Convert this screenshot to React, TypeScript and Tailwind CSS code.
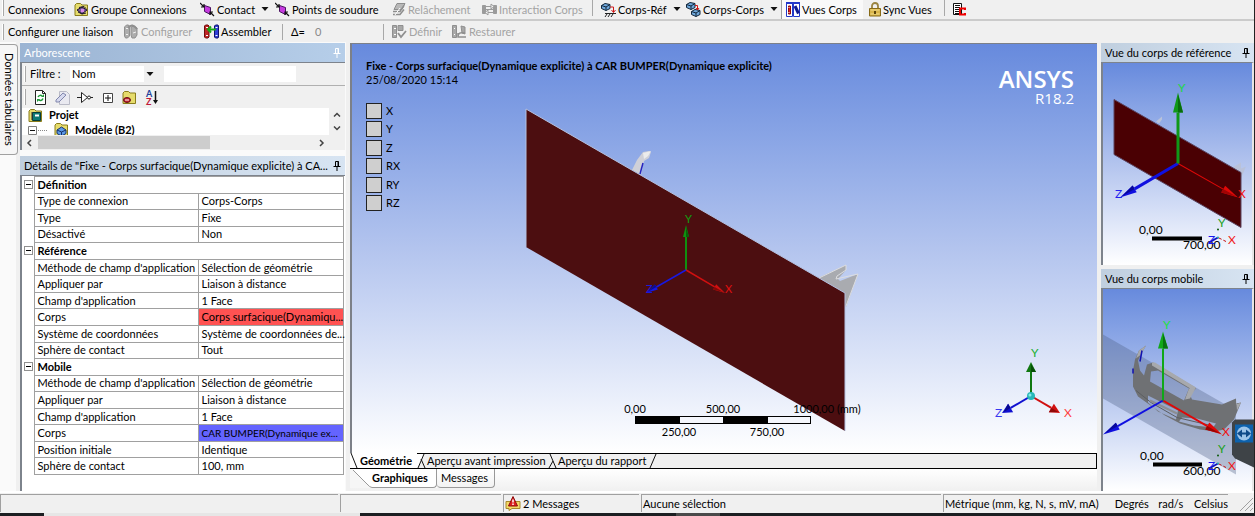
import { ReactNode } from "react";
import clsx from "clsx";

type Row = { label: string; value: string; tone?: "red" | "blue" };
type Section = { title: string; rows: Row[] };

const sections: Section[] = [
  {
    title: "Définition",
    rows: [
      { label: "Type de connexion", value: "Corps-Corps" },
      { label: "Type", value: "Fixe" },
      { label: "Désactivé", value: "Non" },
    ],
  },
  {
    title: "Référence",
    rows: [
      { label: "Méthode de champ d'application", value: "Sélection de géométrie" },
      { label: "Appliquer par", value: "Liaison à distance" },
      { label: "Champ d'application", value: "1 Face" },
      { label: "Corps", value: "Corps surfacique(Dynamiqu...", tone: "red" },
      { label: "Système de coordonnées", value: "Système de coordonnées de..." },
      { label: "Sphère de contact", value: "Tout" },
    ],
  },
  {
    title: "Mobile",
    rows: [
      { label: "Méthode de champ d'application", value: "Sélection de géométrie" },
      { label: "Appliquer par", value: "Liaison à distance" },
      { label: "Champ d'application", value: "1 Face" },
      { label: "Corps", value: "CAR BUMPER(Dynamique ex...", tone: "blue" },
      { label: "Position initiale", value: "Identique" },
      { label: "Sphère de contact", value: "100, mm" },
    ],
  },
];

const axes = ["X", "Y", "Z", "RX", "RY", "RZ"];

/* ---------- icons ---------- */

function Icon({ w = 15, children }: { w?: number; children: ReactNode }) {
  return (
    <svg width={w} height={15} viewBox={`0 0 ${w} 15`} className="shrink-0" aria-hidden="true">
      {children}
    </svg>
  );
}

const Folder = () => (
  <path d="M1 13.5V3l1.5-1.5h4L8 3h5.5v10.5z" fill="#e6dc6c" stroke="#8a7d1c" />
);

const GroupIcon = () => (
  <Icon>
    <Folder />
    <path d="M3 8l5-3 5 3-5 4z" fill="#7b5a9c" stroke="#1d1430" />
    <path d="M5 5.5l5-1 2 2M4 10l4 2 4-1" fill="none" stroke="#1d1430" />
    <rect x="7" y="7" width="3" height="3" fill="#d98ae8" />
  </Icon>
);

const ContactIcon = () => (
  <Icon>
    <path d="M4.5 3.5l6 2v7l-6-3z" fill="#c63be0" stroke="#4a1560" />
    <path d="M0 1l4 4M1 5h3V2M14 14l-4-4M10 13v-3h3" fill="none" stroke="#111" strokeWidth="1.2" />
  </Icon>
);

const ReleaseIcon = () => (
  <Icon w={14}>
    <path d="M5 1.5h8l-3 6H2z" fill="#b8b8b8" stroke="#8d8d8d" />
    <path d="M1 9.5h7l4-6M1 12.5h7l4-5" fill="none" stroke="#8d8d8d" strokeWidth="1.5" />
    <path d="M3 13L8 6" stroke="#fff" />
  </Icon>
);

const InteractionIcon = () => (
  <Icon>
    <path d="M0.5 3.5h3v8h-3zM11.5 3.5h3v8h-3z" fill="#9b9b9b" stroke="#9b9b9b" />
    <path d="M4 4.5h7M4 10.5h7M4 7.500h7" stroke="#9b9b9b" />
    <path d="M9 2l3 2.5L9 7zM6 8l-3 2.5L6 13z" fill="#f4f4f4" stroke="#9b9b9b" />
  </Icon>
);

const Cube = ({ x = 0, y = 0 }: { x?: number; y?: number }) => (
  <g transform={`translate(${x} ${y})`}>
    <path d="M0.5 2.5L4 0.5l5 1v4L5 7.5l-4.5-2z" fill="#6fa8dc" stroke="#12263a" />
    <path d="M0.5 2.5l4.5 1.5 4-2.5M5 4v3.5" fill="none" stroke="#12263a" />
  </g>
);

const BodyGroundIcon = () => (
  <Icon>
    <Cube y={1} />
    <path d="M9 5h3.5v5M10.5 8l2 2.5 2-2.5" fill="none" stroke="#d01818" />
    <path d="M4 11.5h11M6 12l-2 3M9 12l-2 3M12 12l-2 3" stroke="#222" />
  </Icon>
);

const BodyBodyIcon = () => (
  <Icon>
    <Cube />
    <Cube x={5} y={7} />
    <path d="M9 3.5h2.5V8M10 6l1.5 2L13 6" fill="none" stroke="#d01818" />
  </Icon>
);

const BodyViewsIcon = () => (
  <Icon w={14}>
    <path d="M0.5 1.5h6v13h-6zM7.5 1.5h6v13h-6z" fill="#fff" stroke="#2338c8" />
    <path d="M2.5 4v8h2V4z" fill="#e01b1b" stroke="#8c0c0c" />
    <path d="M2.5 5.5h1M2.5 10.5h1" stroke="#fff" />
    <path d="M9 4l3.5 7.5" stroke="#101a90" strokeWidth="3" />
    <path d="M0 1h14" stroke="#2338c8" strokeWidth="2" />
  </Icon>
);

const LockIcon = () => (
  <Icon w={12}>
    <path d="M3 7V4a3 3 0 0 1 6 0v3" fill="none" stroke="#9a8440" strokeWidth="1.8" />
    <path d="M0.5 6.5h11v7.5h-11z" fill="#d9b54a" stroke="#876a16" />
    <path d="M1.5 8h9M1.5 12h9" stroke="#f2dc8c" />
    <path d="M5 9h2v3H5z" fill="#5a430a" />
  </Icon>
);

const WorksheetIcon = () => (
  <Icon>
    <path d="M0.5 1.5h8v11h-8z" fill="#fff" stroke="#111" />
    <path d="M2 3.5h5M2 5.5h5M2 7.5h4M2 9.5h4M2 11.5h4" stroke="#111" />
    <path d="M12 8V6.500H7v6h5V11" fill="none" stroke="#f00000" strokeWidth="2" />
  </Icon>
);

const ConfigureIcon = () => (
  <Icon>
    <path d="M0.5 3l2-2h2l1 2v9l-2 2h-2l-1-2zM7 3l3-1 3 2v7l-2 3H8l-1-3z" fill="#adadad" stroke="#8f8f8f" />
    <path d="M2 4.5h2M2 10.5h2M9 9l3-1" fill="none" stroke="#f0f0f0" />
    <path d="M4 4c3-4 6-3 9 1" fill="none" stroke="#8f8f8f" strokeWidth="2" />
  </Icon>
);

const AssembleIcon = () => (
  <Icon>
    <path d="M0.5 2l1-1h2.5l1 1v11l-1 1H1.5l-1-1z" fill="#c02828" stroke="#700c0c" />
    <path d="M10.5 2l1-1H14l0.5 1v11l-0.5 1h-2.5l-1-1z" fill="#3040d8" stroke="#10106c" />
    <path d="M2 3.5h2M2 11.5h2M11.5 3.5h2M11.5 11.5h2" stroke="#fff" />
    <path d="M4 5.5h8M7 2.5L4 5.5l3 3" fill="none" stroke="#18a818" strokeWidth="2" />
  </Icon>
);

const DefineIcon = () => (
  <Icon>
    <path d="M0.5 1.5h4v12h-4zM6 1.5h5v5H6z" fill="#a8a8a8" stroke="#8f8f8f" />
    <path d="M2 4.5h2M2 10.5h2" stroke="#fff" />
    <path d="M6 9l3 4 5-6" fill="none" stroke="#8f8f8f" strokeWidth="1.8" />
  </Icon>
);

const RestoreIcon = () => (
  <Icon>
    <path d="M0.5 1.5h4v12h-4zM9 2l4 1v7l-3-1z" fill="#a8a8a8" stroke="#8f8f8f" />
    <path d="M6 13c0-4 2-5 7-4M6 9v4h4M10 13h4" fill="none" stroke="#8f8f8f" strokeWidth="1.5" />
    <path d="M2 4.5h1M2 10.5h1" stroke="#fff" />
  </Icon>
);

const Caret = () => (
  <svg width="8" height="5" viewBox="0 0 8 5" className="ml-1 shrink-0" aria-hidden="true">
    <path d="M0.5 0h7L4 4z" fill="#111" />
  </svg>
);

const RefreshIcon = () => (
  <Icon>
    <path d="M2.5 0.5h7l3 3v11h-10z" fill="#fff" stroke="#222" />
    <path d="M9.5 0.5v3h3" fill="none" stroke="#222" />
    <path d="M5 7c1-2 3-2 4-1M10 8.5c-1 2.5-3 2.5-4.5 1" fill="none" stroke="#1f9a3a" strokeWidth="1.5" />
    <path d="M8 7h3V4zM7 9H4v3z" fill="#1f9a3a" />
  </Icon>
);

const EraserIcon = () => (
  <Icon>
    <path d="M4.5 1.5h7l3 3v10h-10z" fill="#e9e9f0" stroke="#b9bac6" />
    <path d="M1 10l7-7 3 2-7 7H1z" fill="#d6d9ee" stroke="#8186ac" />
  </Icon>
);

const GateIcon = () => (
  <Icon w={16}>
    <path d="M4.5 2.5v10l6-5z" fill="#fff" stroke="#222" />
    <path d="M0 7.5h4M13 7.5h3" stroke="#222" />
    <circle cx="12" cy="7.5" r="1.5" fill="#fff" stroke="#222" />
  </Icon>
);

const ExpandAllIcon = () => (
  <Icon>
    <path d="M3.5 3.5h9v9h-9z" fill="#fff" stroke="#444" />
    <path d="M5 8h6M8 5v6" stroke="#111" />
  </Icon>
);

const HideFolderIcon = () => (
  <Icon>
    <Folder />
    <ellipse cx="5" cy="10" rx="3.5" ry="2.5" fill="#c4202c" stroke="#641018" />
    <path d="M3 10h4" stroke="#fff" />
  </Icon>
);

const SortIcon = () => (
  <Icon>
    <text x="2" y="7" fontSize="9" fontWeight="700" fill="#20409a">A</text>
    <text x="2" y="15" fontSize="9" fontWeight="700" fill="#c01838">Z</text>
    <path d="M11.5 1v11" stroke="#111" strokeWidth="1.5" />
    <path d="M9 10h5l-2.5 4z" fill="#111" />
  </Icon>
);

const ProjectIcon = () => (
  <Icon>
    <Folder />
    <path d="M4.5 4.5h8v8h-8z" fill="#0e7a74" stroke="#053c3a" />
    <path d="M7 6.5h4v2H7z" fill="#fff" />
    <path d="M3 5h2M3 7h2M3 9h2M3 11h2" stroke="#333" />
  </Icon>
);

const ModelIcon = () => (
  <Icon>
    <Folder />
    <path d="M3 8l4.5-3L12 8v3.5L7.5 14 3 11.5z" fill="#5d9be8" stroke="#16306c" />
    <path d="M3 8l4.5 2L12 8M7.5 10v4" fill="none" stroke="#16306c" />
  </Icon>
);

const WarningIcon = () => (
  <Icon w={16}>
    <path d="M1 5.5h14v7H7l-3 2v-2H1z" fill="#f4d968" stroke="#a8892a" />
    <path d="M8 0.5l4.5 9.5h-9z" fill="#e02020" stroke="#8c0c0c" />
    <path d="M8 3.5v3M8 7.5v1.5" stroke="#fff" strokeWidth="1.5" />
  </Icon>
);

const Pin = () => (
  <svg width="8" height="10" viewBox="0 0 8 10" aria-hidden="true">
    <path d="M2.5 0.5h3v5M2.5 0.5v5M5 0.5v5M0.5 5.5h7M4 6v4" fill="none" stroke="currentColor" />
  </svg>
);

/* ---------- toolbar parts ---------- */

function Tool({ icon, label, className, caret, disabled, pressed }: {
  icon: ReactNode;
  label?: string;
  className?: string;
  caret?: boolean;
  disabled?: boolean;
  pressed?: boolean;
}) {
  return (
    <button
      type="button"
      disabled={disabled}
      aria-label={label ?? "Feuille de travail"}
      aria-pressed={pressed}
      className={clsx(
        "flex h-[19px] shrink-0 items-center gap-0.5 whitespace-nowrap",
        disabled && "text-[#a3a3a3]",
        pressed && "border-l border-[#a0a0a0] bg-[#f9f9f9] pl-1",
        className,
      )}
    >
      {icon}
      {label}
      {caret && <Caret />}
    </button>
  );
}

const Grip = () => <span className="h-4 w-0.5 shrink-0 border-r border-[#a8a8a8] bg-white" />;
const Divider = () => <span className="mr-2 h-4 w-px shrink-0 bg-[#a8a8a8]" />;

function PanelHeader({ title, active }: { title: string; active?: boolean }) {
  return (
    <header
      className={clsx(
        "flex h-[19px] shrink-0 items-center justify-between bg-linear-to-r px-1",
        active ? "from-[#9bb4d3] to-[#b6cee9] text-white" : "from-[#c0cfdf] to-[#d7e4f2]",
      )}
    >
      <h2 className="whitespace-nowrap">{title}</h2>
      <button type="button" aria-label="Épingler" className="shrink-0">
        <Pin />
      </button>
    </header>
  );
}

/* ---------- 3D drawing parts ---------- */

type ArrowProps = { x: number; y: number; dx: number; dy: number; head: number; half: number; color: string; dark: string; w: number };

function Arrow({ x, y, dx, dy, head, half, color, dark, w }: ArrowProps) {
  const len = Math.hypot(dx, dy);
  const angle = (Math.atan2(dy, dx) * 180) / Math.PI;
  return (
    <g transform={`translate(${x} ${y}) rotate(${angle})`}>
      <path d={`M0 0H${len - head}`} stroke={color} strokeWidth={w} />
      <path d={`M${len - head} ${-half}L${len} 0L${len - head} ${half}z`} fill={color} />
      <path d={`M${len - head} 0H${len - 2}L${len - head} ${half}z`} fill={dark} />
    </g>
  );
}

const SmallTriad = ({ x, y }: { x: number; y: number }) => (
  <g fontSize="12">
    <path d={`M${x} ${y}l8 4`} stroke="#c01010" strokeDasharray="4 2" />
    <path d={`M${x} ${y}l-9 5`} stroke="#1010c0" strokeWidth="2" />
    <circle cx={x} cy={y} r="1" fill="#20b0b0" />
    <circle cx={x} cy={y - 8} r="1" fill="#0a5a0a" />
    <text x={x} y={y - 11} fill="#18a018">Y</text>
    <text x={x + 10} y={y + 6} fill="#f01818">X</text>
    <text x={x - 10} y={y + 6} fill="#1818f0">Z</text>
  </g>
);

function MainScene() {
  return (
    <svg viewBox="352 44 745 409" className="absolute inset-0 h-full w-full" role="img" aria-label="Vue géométrique">
      <path d="M632 170l5-10 6-8 6-1 2 1-2 6-5 3-3 14z" fill="#cfd0d8" />
      <path d="M643 153l8-2-3 5-4 3z" fill="#ececec" />
      <path d="M640 174l3-11" stroke="#2424c0" strokeWidth="1.5" />
      <path d="M818 278l28-13v5l-8 9 2 2 18-7-12 33-6-12z" fill="#a9abb0" />
      <path d="M819 278l27-13v5l-9 6-1 3 22-5-12 32" fill="none" stroke="#dcdde0" />
      <path d="M526 109L845 293V431L526 247z" fill="#4c0e10" />
      <path d="M526 247V109L845 293V431" fill="none" stroke="#b4c0e0" />

      <Arrow x={686} y={270} dx={0} dy={-45} head={12} half={3} color="#109010" dark="#086008" w={2} />
      <Arrow x={686} y={270} dx={39} dy={23} head={12} half={3} color="#d01010" dark="#800808" w={1.5} />
      <Arrow x={686} y={270} dx={-40} dy={23} head={12} half={3} color="#1818e0" dark="#0c0c90" w={1.5} />
      <g fontSize="11">
        <text x="685" y="223" fill="#10a010">Y</text>
        <text x="725" y="293" fill="#e01010">X</text>
        <text x="646" y="293" fill="#1818e0">Z</text>
      </g>

      <path d="M635 416h176v8H635z" fill="#000" />
      <path d="M680 417h43v6h-43zM768 417h42v6h-42z" fill="#f4f6fc" />
      <g fontSize="11" textAnchor="middle">
        <text x="635" y="413">0,00</text>
        <text x="723" y="413">500,00</text>
        <text x="679" y="436">250,00</text>
        <text x="767" y="436">750,00</text>
        <text x="827" y="413">1000,00 (mm)</text>
      </g>

      <Arrow x={1031} y={396} dx={0} dy={-34} head={10} half={5} color="#107810" dark="#085008" w={2} />
      <Arrow x={1031} y={396} dx={29} dy={17} head={10} half={5} color="#d01010" dark="#900808" w={2} />
      <Arrow x={1031} y={396} dx={-29} dy={17} head={10} half={5} color="#1010d0" dark="#080890" w={2} />
      <circle cx="1031" cy="396" r="4" fill="#28b8b8" />
      <circle cx="1030" cy="395" r="1.5" fill="#8ce8e8" />
      <g fontSize="12">
        <text x="1031" y="357" fill="#20b030">Y</text>
        <text x="1064" y="417" fill="#ff4040">X</text>
        <text x="995" y="417" fill="#3838f0">Z</text>
      </g>

      <g fill="#fff" textAnchor="end" className="font-['Open_Sans',sans-serif]">
        <text x="1074" y="88" fontSize="24" fontWeight="600">ANSYS</text>
        <text x="1074" y="104" fontSize="15">R18.2</text>
      </g>
    </svg>
  );
}

function ReferenceScene() {
  return (
    <svg viewBox="1103 63 149 201" className="h-full w-full" role="img" aria-label="Corps de référence">
      <path d="M1156 121l6-5v3l-3 4zM1231 168l10-6v6l5-2-6 14z" fill="#b9c2da" />
      <path d="M1114 99L1241 172V227L1114 154z" fill="#4a0003" stroke="#5c4460" />
      <Arrow x={1178} y={163} dx={60} dy={34} head={17} half={4} color="#e00808" dark="#a00404" w={1} />
      <Arrow x={1178} y={163} dx={-58} dy={34} head={17} half={4} color="#1010e0" dark="#08089c" w={3} />
      <Arrow x={1178} y={163} dx={0} dy={-71} head={20} half={5} color="#109818" dark="#086c0c" w={3} />
      <g fontSize="12">
        <text x="1178" y="91" fill="#20d840">Y</text>
        <text x="1238" y="197" fill="#f01010">X</text>
        <text x="1115" y="197" fill="#2020f0">Z</text>
        <text x="1139" y="233">0,00</text>
        <text x="1183" y="248">700,00</text>
      </g>
      <path d="M1152 236h50v4h-50z" />
      <SmallTriad x={1218} y={237} />
    </svg>
  );
}

function MobileScene() {
  return (
    <svg viewBox="1103 289 149 201" className="h-full w-full overflow-visible" role="img" aria-label="Corps mobile">
      <path d="M1103 334L1236 410V474L1103 398z" fill="#4e5f85" fillOpacity="0.35" />
      {/* bumper shell with its three openings */}
      <path
        fillRule="evenodd"
        fill="#6f7174"
        d="M1146 345L1139 350L1135 359L1133 370V386L1138 396L1152 406L1165 415L1180 423L1200 429L1215 431L1224 429L1234 419L1241 402L1236 403V398L1222 404L1192 399L1190 394L1196 388L1175 375L1153 362L1147 364L1144 375L1140 370L1138 360L1142 352Z
           M1151 371L1158 370L1189 388L1184 400L1150 381Z
           M1148 395L1178 410L1176 419L1158 411L1148 402Z
           M1182 417L1197 418L1216 423L1213 427L1194 425L1179 421Z"
      />
      <path d="M1146 345l-7 5-3 8 5-4zM1152 362l3 0 41 25-4 2-40-24zM1189 388l7-1-6 11-5 1zM1236 398v6l5-2-4 8z" fill="#a7a9ad" />
      <path d="M1136 390l15 12 26 15 34 8" fill="none" stroke="#5c5e62" />
      <path d="M1150 400l27 13" fill="none" stroke="#8c8e92" strokeWidth="2" />
      <path d="M1142 350l-2 11M1133 368v5" stroke="#1010b0" strokeWidth="1.5" />
      <Arrow x={1163} y={400} dx={59} dy={34} head={17} half={4} color="#e00808" dark="#980404" w={2} />
      <Arrow x={1163} y={400} dx={-60} dy={34} head={17} half={4} color="#1010e0" dark="#08089c" w={2} />
      <Arrow x={1163} y={400} dx={0} dy={-69} head={17} half={5} color="#10a818" dark="#087410" w={2} />
      <g fontSize="12">
        <text x="1163" y="328" fill="#20e040">Y</text>
        <text x="1222" y="435" fill="#f01010">X</text>
        <text x="1140" y="459">0,00</text>
        <text x="1183" y="474">600,00</text>
      </g>
      <path d="M1153 462h49v4h-49z" />
      <SmallTriad x={1218} y={463} />
      <path d="M1232 422l3-3h19v48l-19-9-3-4z" fill="#3e4347" />
      <path d="M1235 424h18v18h-18z" fill="#0d62ad" />
      <circle cx="1244" cy="433" r="7" fill="#9cc4e8" />
      <path d="M1237 433l5-4v3h4v-3l5 4-5 4v-3h-4v3z" fill="#0d4a88" />
    </svg>
  );
}

/* ---------- panels ---------- */

function TreePanel() {
  return (
    <section className="flex flex-col">
      <PanelHeader title="Arborescence" active />
      <div className="border-t border-l-2 border-[#7d838c] bg-[#f0f0f0]">
        <div className="flex h-[23px] items-center border-b border-[#b0b0b0] pl-0.5">
          <Grip />
          <label htmlFor="filter-kind" className="w-11 pl-1">Filtre :</label>
          <span className="relative flex">
            <select id="filter-kind" className="h-4 w-[86px] appearance-none bg-white px-0.5 outline-none" defaultValue="Nom">
              <option>Nom</option>
            </select>
            <span className="pointer-events-none absolute inset-y-0 right-0 flex w-3 items-center justify-center bg-[#f0f0f0]">
              <svg width="8" height="5" viewBox="0 0 8 5" aria-hidden="true">
                <path d="M0.5 0h7L4 4z" fill="#111" />
              </svg>
            </span>
          </span>
          <input aria-label="Texte du filtre" className="ml-2 h-4 w-[132px] bg-white px-1 outline-none" />
        </div>
        <div className="flex h-[22px] items-center gap-[7px] pl-0.5">
          <Grip />
          <button type="button" aria-label="Actualiser"><RefreshIcon /></button>
          <button type="button" aria-label="Effacer"><EraserIcon /></button>
          <button type="button" aria-label="Étendre la sélection"><GateIcon /></button>
          <button type="button" aria-label="Développer tout"><ExpandAllIcon /></button>
          <button type="button" aria-label="Masquer les dossiers"><HideFolderIcon /></button>
          <button type="button" aria-label="Trier"><SortIcon /></button>
        </div>
        <div className="flex h-[27px] bg-white">
          <ul className="flex-1 overflow-hidden pl-1.5 font-bold">
            <li className="flex h-[14px] items-center gap-1.5"><ProjectIcon />Projet</li>
            <li className="flex h-[15px] items-center gap-1.5">
              <svg width="20" height="14" viewBox="0 0 20 14" aria-hidden="true">
                <path d="M0.5 3.5h8v8h-8z" fill="#fff" stroke="#808080" />
                <path d="M2 7.5h5" stroke="#111" />
                <path d="M10 7.5h10" stroke="#888" strokeDasharray="1 1" />
              </svg>
              <ModelIcon />Modèle (B2)
            </li>
          </ul>
          <div className="flex w-4 flex-col items-center justify-around bg-[#f0f0f0]">
            <svg width="8" height="5" viewBox="0 0 8 5" aria-hidden="true"><path d="M1 4.5l3-3 3 3" fill="none" stroke="#444" strokeWidth="1.5" /></svg>
            <svg width="8" height="5" viewBox="0 0 8 5" aria-hidden="true"><path d="M1 0.5l3 3 3-3" fill="none" stroke="#444" strokeWidth="1.5" /></svg>
          </div>
        </div>
        <div className="flex h-[15px] items-center pr-4 pl-1">
          <svg width="6" height="8" viewBox="0 0 6 8" aria-hidden="true"><path d="M5 1L2 4l3 3" fill="none" stroke="#444" strokeWidth="1.5" /></svg>
          <span className="mr-auto ml-1.5 h-[13px] w-[172px] bg-[#cdcdcd]" />
          <svg width="6" height="8" viewBox="0 0 6 8" className="mr-1" aria-hidden="true"><path d="M1 1l3 3-3 3" fill="none" stroke="#444" strokeWidth="1.5" /></svg>
        </div>
      </div>
    </section>
  );
}

function DetailsPanel() {
  return (
    <section className="mt-1.5 flex flex-1 flex-col">
      <PanelHeader title={'Détails de "Fixe - Corps surfacique(Dynamique explicite) à CA...'} />
      <div className="flex-1 border-t border-l-2 border-[#7d838c] bg-white pr-px">
        <table className="h-[299px] w-full table-fixed border-collapse leading-[14px]">
          <colgroup>
            <col className="w-3" />
            <col className="w-[164px]" />
            <col />
          </colgroup>
          {sections.map((section) => (
            <tbody key={section.title}>
              <tr>
                <td className="border-r border-[#a0a0a0] p-0">
                  <button type="button" aria-label={`Réduire ${section.title}`} className="ml-0.5 flex size-[9px] items-center justify-center border border-[#909090]">
                    <span className="h-px w-[5px] bg-black" />
                  </button>
                </td>
                <th colSpan={2} scope="rowgroup" className="border border-[#a0a0a0] px-[3px] py-0 text-left">{section.title}</th>
              </tr>
              {section.rows.map((row) => (
                <tr key={row.label}>
                  <td className="border-r border-[#a0a0a0] p-0" />
                  <th scope="row" className="border border-[#a0a0a0] px-[3px] py-0 text-left font-normal whitespace-nowrap">{row.label}</th>
                  <td
                    className={clsx(
                      "border border-[#a0a0a0] py-0 pl-[3px] whitespace-nowrap",
                      row.tone === "red" && "bg-[#ff5252]",
                      row.tone === "blue" && "bg-[#6464ff] text-[10px]",
                    )}
                  >
                    {row.value}
                  </td>
                </tr>
              ))}
            </tbody>
          ))}
        </table>
      </div>
    </section>
  );
}

function Viewport() {
  return (
    <section className="flex min-w-0 flex-1 flex-col pt-px">
      <div className="relative min-h-[409px] flex-1 border-t border-l-2 border-[#7c8088] bg-linear-to-b from-[#678add] via-[#b3c4ee] to-white">
        <MainScene />
        <div className="relative pt-[15px] pl-3.5">
          <h1 className="leading-[14px] font-bold">Fixe - Corps surfacique(Dynamique explicite) à CAR BUMPER(Dynamique explicite)</h1>
          <p className="leading-[14px]">25/08/2020 15:14</p>
          <div className="mt-4 flex h-[108px] flex-col justify-between">
            {axes.map((axis) => (
              <label key={axis} className="flex h-4 items-center gap-1">
                <input type="checkbox" className="size-4 appearance-none border border-[#222] bg-[#cfcfcf]" />
                {axis}
              </label>
            ))}
          </div>
        </div>
      </div>
      <nav className="flex h-4 items-stretch border-t border-r border-b border-black bg-[#f0f0f0]">
        <button type="button" className="-mt-px flex bg-white font-bold">
          <svg width="10" height="15" viewBox="0 0 10 15" aria-hidden="true"><path d="M1 0l6 15" stroke="#111" fill="none" /></svg>
          <span className="w-[57px] text-left leading-4">Géométrie</span>
        </button>
        <svg width="10" height="14" viewBox="0 0 10 14" aria-hidden="true"><path d="M0 0h7L1 14H0z" fill="#fff" /><path d="M1 14L7 0M4 5l4 9" stroke="#111" fill="none" /></svg>
        <button type="button" className="w-[121px] text-left whitespace-nowrap">Aperçu avant impression</button>
        <svg width="10" height="14" viewBox="0 0 10 14" aria-hidden="true"><path d="M2 0l6 14M1 14l4-7" stroke="#111" fill="none" /></svg>
        <button type="button" className="w-[91px] text-left whitespace-nowrap">Aperçu du rapport</button>
        <svg width="10" height="14" viewBox="0 0 10 14" aria-hidden="true"><path d="M1 14L7 0" stroke="#111" fill="none" /></svg>
      </nav>
      <nav className="flex h-[22px] items-start bg-linear-to-b from-white to-[#f0f0f0]">
        <button type="button" className="flex h-[19px] items-center bg-white font-bold">
          <svg width="22" height="19" viewBox="0 0 22 19" aria-hidden="true">
            <path d="M0 0h3l14 15q3 3.5 5 3.5V19H0z" fill="#f6f6f6" />
            <path d="M3 1l14 14q3 3.5 5 3.5" fill="none" stroke="#999" />
          </svg>
          <span className="flex h-full w-[65px] items-center rounded-br-sm border-r border-b border-[#999]">Graphiques</span>
        </button>
        <button type="button" className="h-[19px] w-[58px] rounded-b-sm border-r border-b border-[#999] pl-1 text-left">Messages</button>
      </nav>
    </section>
  );
}

function SidePane({ title, children }: { title: string; children: ReactNode }) {
  return (
    <section className="flex flex-1 flex-col">
      <PanelHeader title={title} />
      <div className="flex-auto border-t border-r-2 border-l-2 border-t-[#7d838c] border-r-[#e6e6e6] border-l-[#7d838c] bg-linear-to-b from-[#678add] via-[#b3c4ee] to-white">
        {children}
      </div>
    </section>
  );
}

function StatusCell({ className, children }: { className: string; children?: ReactNode }) {
  return (
    <div className={clsx("flex h-[18px] items-center border-t border-l border-[#a0a0a0] pl-px", className)}>{children}</div>
  );
}

export default function App() {
  return (
    <div className="flex min-h-screen flex-col border-r border-[#222] bg-[#f0f0f0] font-[Lato,sans-serif] text-[11px] leading-[14px] text-black">
      <div className="flex h-[21px] items-start overflow-hidden border-b-2 border-[#cbcbcb] pl-0.5">
        <Grip />
        <span className="w-[70px] shrink-0 pt-[3px] pl-1">Connexions</span>
        <Tool className="w-[126px]" icon={<GroupIcon />} label="Groupe Connexions" />
        <Tool className="w-[75px]" icon={<ContactIcon />} label="Contact" caret />
        <Tool className="w-[117px]" icon={<ContactIcon />} label="Points de soudure" />
        <Tool className="w-[90px]" icon={<ReleaseIcon />} label="Relâchement" disabled />
        <Tool className="w-[110px]" icon={<InteractionIcon />} label="Interaction Corps" disabled />
        <Divider />
        <Tool className="w-[85px]" icon={<BodyGroundIcon />} label="Corps-Réf" caret />
        <Tool className="w-[95px]" icon={<BodyBodyIcon />} label="Corps-Corps" caret />
        <Tool className="w-[82px]" icon={<BodyViewsIcon />} label="Vues Corps" pressed />
        <Tool className="ml-1.5 w-[75px]" icon={<LockIcon />} label="Sync Vues" />
        <Divider />
        <Tool icon={<WorksheetIcon />} />
      </div>
      <div className="flex h-[21px] items-center overflow-hidden pl-0.5">
        <Grip />
        <span className="w-[120px] shrink-0 pl-1">Configurer une liaison</span>
        <Tool className="w-[80px]" icon={<ConfigureIcon />} label="Configurer" disabled />
        <Tool className="w-[78px]" icon={<AssembleIcon />} label="Assembler" />
        <Divider />
        <span className="w-6 shrink-0">Δ=</span>
        <span className="w-[68px] shrink-0 text-[#888]">0</span>
        <Divider />
        <Tool className="w-[60px]" icon={<DefineIcon />} label="Définir" disabled />
        <Tool icon={<RestoreIcon />} label="Restaurer" disabled />
      </div>

      <main className="flex flex-1 gap-1">
        <aside className="w-4 shrink-0 bg-[#fafafa] pt-0.5">
          <button type="button" className="h-[111px] w-[18px] rounded-r-sm border border-l-0 border-[#a0a0a0] bg-[#f6f6f6] [writing-mode:vertical-rl]">
            Données tabulaires
          </button>
        </aside>
        <div className="flex w-[326px] shrink-0 flex-col bg-[#fafafa] pt-px pr-px">
          <TreePanel />
          <DetailsPanel />
        </div>
        <Viewport />
        <div className="flex w-[153px] shrink-0 flex-col gap-1 pt-px">
          <SidePane title="Vue du corps de référence"><ReferenceScene /></SidePane>
          <SidePane title="Vue du corps mobile"><MobileScene /></SidePane>
        </div>
      </main>

      <footer className="flex h-[22px] items-center gap-0.5 border-t-2 border-white">
        <StatusCell className="w-[338px]" />
        <StatusCell className="w-[161px]" />
        <StatusCell className="w-[136px] gap-0.5"><WarningIcon />2 Messages</StatusCell>
        <StatusCell className="flex-1">Aucune sélection</StatusCell>
        <StatusCell className="w-[285px] whitespace-nowrap">
          <span className="w-[171px]">Métrique (mm, kg, N, s, mV, mA)</span>
          <span className="w-11">Degrés</span>
          <span className="w-9">rad/s</span>
          <span>Celsius</span>
        </StatusCell>
        <svg width="24" height="18" viewBox="0 0 24 18" aria-hidden="true">
          <path d="M10 17L23 4M15 17l8-8M20 17l3-3" stroke="#a0a0a0" />
        </svg>
      </footer>
      <div className="flex h-[3px] bg-[#1c1f22]">
        <span className="ml-11 w-[316px] bg-[#e6e6e6]" />
        <span className="ml-[316px] w-11 bg-[#4a4a4a]" />
      </div>
    </div>
  );
}
